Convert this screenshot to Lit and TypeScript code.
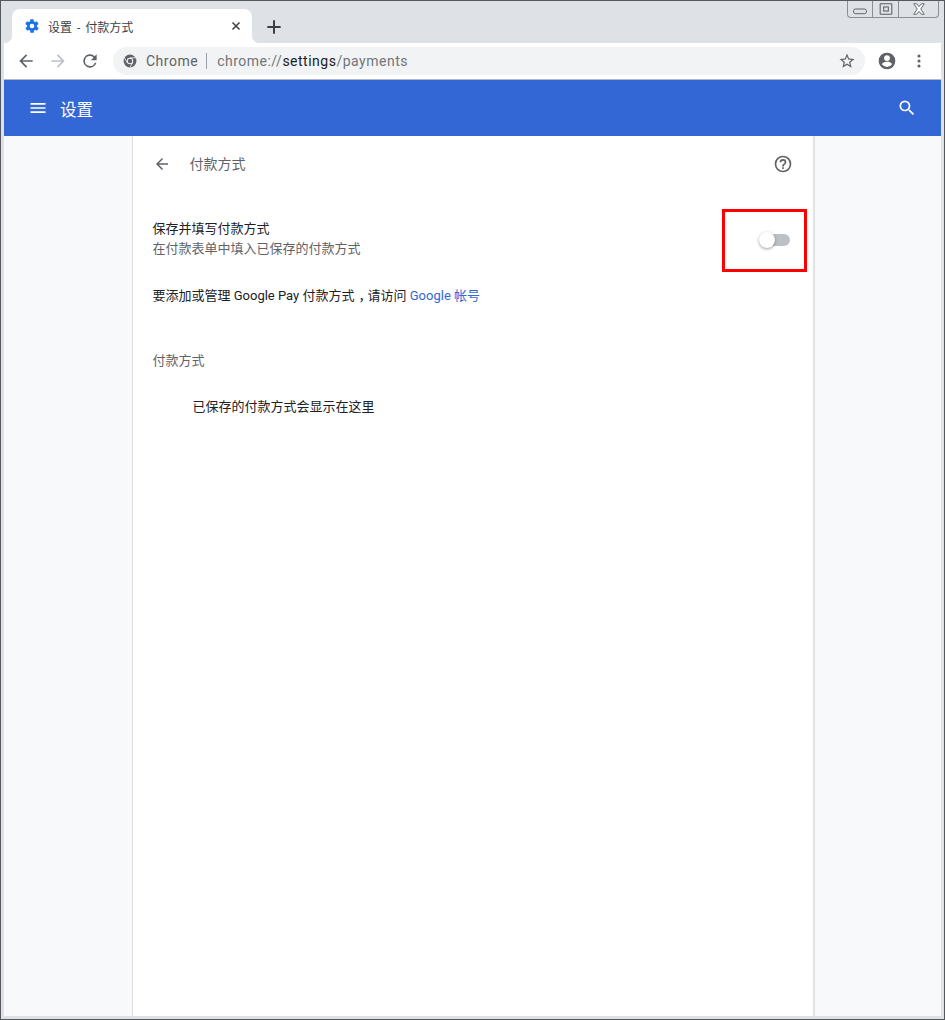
import { LitElement, html, css, svg } from "lit";
import { customElement } from "lit/decorators.js";

const icon = (size: number, body: unknown, cls = "") =>
  html`<svg class=${cls} width=${size} height=${size} viewBox="0 0 24 24">${body}</svg>`;

@customElement("app-root")
export class AppRoot extends LitElement {
  static styles = css`
    :host {
      display: block;
      width: 945px;
      height: 1020px;
      font-family: Roboto, "Noto Sans CJK SC", sans-serif;
      font-size: 13px;
      color: #202124;
    }
    * { box-sizing: border-box; }
    svg { display: block; flex: none; }
    .window {
      position: relative;
      width: 945px;
      height: 1020px;
      display: flex;
      flex-direction: column;
      background: #dee1e6;
      border: 1px solid #55585c;
      padding: 0 3px 3px 3px;
      overflow: hidden;
    }
    .controls {
      position: absolute;
      top: 0;
      right: 5px;
      width: 92px;
      height: 17px;
      display: flex;
      border: 1px solid #8b8f94;
      border-top: 0;
      border-radius: 0 0 4px 4px;
      background: #dee1e6;
    }
    .controls div { display: flex; align-items: center; justify-content: center; }
    .controls div + div { border-left: 1px solid #8b8f94; }
    .c1 { width: 24px; }
    .c2 { width: 26px; }
    .c3 { flex: 1; }
    .strip {
      height: 42px;
      flex: none;
      display: flex;
      align-items: flex-end;
      padding-left: 8px;
    }
    .tab {
      position: relative;
      width: 240px;
      height: 34px;
      background: #fff;
      border-radius: 8px 8px 0 0;
      display: flex;
      align-items: center;
      padding: 0 10px 0 12px;
      font-size: 12px;
      color: #3c4043;
    }
    .tab::before, .tab::after {
      content: "";
      position: absolute;
      bottom: 0;
      width: 8px;
      height: 8px;
    }
    .tab::before { left: -8px; background: radial-gradient(circle at 0 0, transparent 8px, #fff 8.5px); }
    .tab::after { right: -8px; background: radial-gradient(circle at 100% 0, transparent 8px, #fff 8.5px); }
    .tab-title { margin-left: 8px; flex: 1; white-space: nowrap; word-spacing: 2px; }
    .newtab { margin-left: 14px; margin-bottom: 8px; }
    .toolbar {
      height: 37px;
      flex: none;
      background: #fff;
      border-bottom: 1px solid #b6b8bb;
      display: flex;
      align-items: center;
      gap: 12px;
      padding: 0 0 0 12px;
    }
    .omni {
      margin-left: 1px;
      width: 752px;
      height: 28px;
      border-radius: 14px;
      background: #f1f3f4;
      display: flex;
      align-items: center;
      padding: 0 9px 0 10px;
      font-size: 14px;
      letter-spacing: 0.5px;
      color: #5f6368;
      white-space: nowrap;
    }
    .chip { margin-right: 9px; }
    .sep { width: 1px; height: 16px; background: #9aa0a6; margin: 0 10px 0 8px; }
    .dark { color: #202124; }
    .path { color: #70757a; }
    .grow { flex: 1; }
    .more { margin-left: 2px; }
    .header {
      height: 56px;
      flex: none;
      background: #3367d6;
      color: #fff;
      display: flex;
      align-items: center;
      padding: 0 24px;
      font-size: 16.5px;
    }
    .header .title { margin-left: 12px; padding-top: 2px; }
    .main {
      flex: 1;
      background: #f8f9fa;
      display: flex;
      padding-left: 128px;
      min-height: 0;
    }
    .card {
      width: 683px;
      background: #fff;
      border-left: 1px solid #dcdde0;
      border-right: 2px solid #e1e2e5;
      display: flex;
      flex-direction: column;
      padding: 0 20px 0 19.5px;
    }
    .sub {
      height: 56px;
      display: flex;
      align-items: center;
      color: #5f6368;
      font-size: 14px;
    }
    .sub .t { margin-left: 19px; line-height: 18px; margin-top: -1px; }
    .row {
      margin-top: 27px;
      height: 40px;
      display: flex;
      flex-direction: column;
      justify-content: center;
      line-height: 20px;
    }
    .row .s { color: #5f6368; }
    .link-row { margin-top: 27px; height: 20px; line-height: 20px; }
    .link { color: #3367d6; }
    .comma { padding-left: 4px; letter-spacing: -4px; }
    .section { margin-top: 45px; height: 20px; line-height: 20px; color: #5f6368; }
    .empty { margin-top: 26px; padding-left: 40px; line-height: 20px; height: 20px; }
    .redbox {
      position: absolute;
      left: 721px;
      top: 208px;
      width: 85px;
      height: 63px;
      border: 3px solid #fe0000;
      z-index: 2;
    }
    .track {
      position: absolute;
      left: 758px;
      top: 232px;
      width: 31px;
      height: 13px;
      z-index: 1;
    }
    .bar {
      position: absolute;
      left: 2px;
      top: 1px;
      right: 0;
      height: 12px;
      border-radius: 6px;
      background: #bdc1c6;
    }
    .knob {
      position: absolute;
      left: 0;
      top: -1px;
      width: 16px;
      height: 16px;
      border-radius: 50%;
      background: #fff;
      box-shadow: 0 1px 3px rgba(0,0,0,.4);
    }
  `;

  render() {
    return html`
      <div class="window">
        <div class="strip">
          <div class="tab">
            ${icon(16, svg`<path fill="#1a73e8" d="M19.4 13a7.5 7.5 0 0 0 0-2l2.1-1.6a.5.5 0 0 0 .1-.6l-2-3.5a.5.5 0 0 0-.6-.2l-2.5 1a7.3 7.3 0 0 0-1.7-1l-.4-2.7a.5.5 0 0 0-.5-.4h-4a.5.5 0 0 0-.5.4l-.4 2.7a7.3 7.3 0 0 0-1.7 1l-2.5-1a.5.5 0 0 0-.6.2l-2 3.5a.5.5 0 0 0 .1.6L4.6 11a7.5 7.5 0 0 0 0 2l-2.1 1.6a.5.5 0 0 0-.1.6l2 3.5c.1.2.4.3.6.2l2.5-1c.5.4 1.1.7 1.7 1l.4 2.7c0 .2.2.4.5.4h4c.3 0 .5-.2.5-.4l.4-2.7a7.3 7.3 0 0 0 1.7-1l2.5 1c.2.1.5 0 .6-.2l2-3.5a.5.5 0 0 0-.1-.6zM12 15.5a3.5 3.5 0 1 1 0-7 3.5 3.5 0 0 1 0 7z"/>`)}
            <span class="tab-title">设置 - 付款方式</span>
            ${icon(12, svg`<path stroke="#3c4043" stroke-width="3" d="M5 5l14 14M19 5L5 19"/>`)}
          </div>
          ${icon(16, svg`<path stroke="#3c4043" stroke-width="3" d="M12 2v20M2 12h20"/>`, "newtab")}
        </div>
        <div class="toolbar">
          ${icon(20, svg`<path fill="#5f6368" d="M20 11H7.8l5.6-5.6L12 4l-8 8 8 8 1.4-1.4L7.8 13H20z"/>`)}
          ${icon(20, svg`<path fill="#bdc1c6" d="M4 11h12.2l-5.6-5.6L12 4l8 8-8 8-1.4-1.4 5.6-5.6H4z"/>`)}
          ${icon(20, svg`<path fill="#5f6368" d="M17.65 6.35A8 8 0 1 0 19.73 14h-2.08A6 6 0 1 1 12 6c1.66 0 3.14.69 4.22 1.78L13 11h7V4z"/>`)}
          <div class="omni">
            ${icon(14, svg`<circle cx="12" cy="12" r="11" fill="#5f6368"/><circle cx="12" cy="12" r="5.5" fill="#f1f3f4"/><circle cx="12" cy="12" r="3.8" fill="#5f6368"/><path stroke="#f1f3f4" stroke-width="1.4" d="M12 6.5h10M7 14.8 2.5 6.5M16.6 15 12 23"/>`, "chip")}
            <span>Chrome</span><span class="sep"></span>
            <span class="path">chrome://</span><span class="dark">settings</span><span class="path">/payments</span>
            <span class="grow"></span>
            ${icon(18, svg`<path fill="#5f6368" d="M22 9.24l-7.19-.62L12 2 9.19 8.63 2 9.24l5.46 4.73L5.82 21 12 17.27 18.18 21l-1.63-7.03L22 9.24zM12 15.4l-3.76 2.27 1-4.28-3.32-2.88 4.38-.38L12 6.1l1.71 4.04 4.38.38-3.32 2.88 1 4.28L12 15.4z"/>`)}
          </div>
          ${icon(20, svg`<path fill="#5f6368" d="M12 2a10 10 0 1 0 0 20 10 10 0 0 0 0-20zm0 3a3.5 3.5 0 1 1 0 7 3.5 3.5 0 0 1 0-7zm0 14.2a7.2 7.2 0 0 1-6-3.22c.03-2 4-3.08 6-3.08s5.97 1.09 6 3.08a7.2 7.2 0 0 1-6 3.22z"/>`)}
          ${icon(16, svg`<circle cx="12" cy="4.5" r="2.3" fill="#5f6368"/><circle cx="12" cy="12" r="2.3" fill="#5f6368"/><circle cx="12" cy="19.5" r="2.3" fill="#5f6368"/>`, "more")}
        </div>
        <div class="header">
          ${icon(20, svg`<path fill="#fff" d="M3 18h18v-2H3zm0-5h18v-2H3zm0-7v2h18V6z"/>`)}
          <span class="title">设置</span>
          <span class="grow"></span>
          ${icon(20, svg`<path fill="#fff" d="M15.5 14h-.79l-.28-.27A6.47 6.47 0 0 0 16 9.5 6.5 6.5 0 1 0 9.5 16c1.61 0 3.09-.59 4.23-1.57l.27.28v.79l5 4.99L20.49 19zm-6 0C7.01 14 5 11.99 5 9.5S7.01 5 9.5 5 14 7.01 14 9.5 11.99 14 9.5 14z"/>`)}
        </div>
        <div class="main">
          <div class="card">
            <div class="sub">
              ${icon(18, svg`<path fill="#5f6368" d="M20 11H7.8l5.6-5.6L12 4l-8 8 8 8 1.4-1.4L7.8 13H20z"/>`)}
              <span class="t">付款方式</span>
              <span class="grow"></span>
              ${icon(20, svg`<path fill="#5f6368" d="M11 18h2v-2h-2zm1-16a10 10 0 1 0 0 20 10 10 0 0 0 0-20zm0 18a8 8 0 1 1 0-16 8 8 0 0 1 0 16zm0-14a4 4 0 0 0-4 4h2a2 2 0 1 1 4 0c0 2-3 1.75-3 5h2c0-2.25 3-2.5 3-5a4 4 0 0 0-4-4z"/>`)}
            </div>
            <div class="row">
              <div>保存并填写付款方式</div>
              <div class="s">在付款表单中填入已保存的付款方式</div>
            </div>
            <div class="link-row">要添加或管理 Google Pay 付款方式<span class="comma">，</span>请访问 <span class="link">Google 帐号</span></div>
            <div class="section">付款方式</div>
            <div class="empty">已保存的付款方式会显示在这里</div>
          </div>
        </div>
        <div class="controls">
          <div class="c1">${icon(14, svg`<rect x="1" y="12" width="22" height="8" rx="3" fill="none" stroke="#5b5f63" stroke-width="1.6"/>`)}</div>
          <div class="c2">${icon(14, svg`<rect x="2" y="3" width="20" height="18" rx="1" fill="none" stroke="#5b5f63" stroke-width="1.8"/><rect x="8" y="8.5" width="8" height="7" fill="none" stroke="#5b5f63" stroke-width="1.8"/>`)}</div>
          <div class="c3">${icon(14, svg`<path fill="#fff" stroke="#5b5f63" stroke-width="1.6" d="M3 3h5l4 5 4-5h5l-6 9 6 9h-5l-4-5-4 5H3l6-9z"/>`)}</div>
        </div>
        <div class="track"><div class="bar"></div><div class="knob"></div></div>
        <div class="redbox"></div>
      </div>
    `;
  }
}
